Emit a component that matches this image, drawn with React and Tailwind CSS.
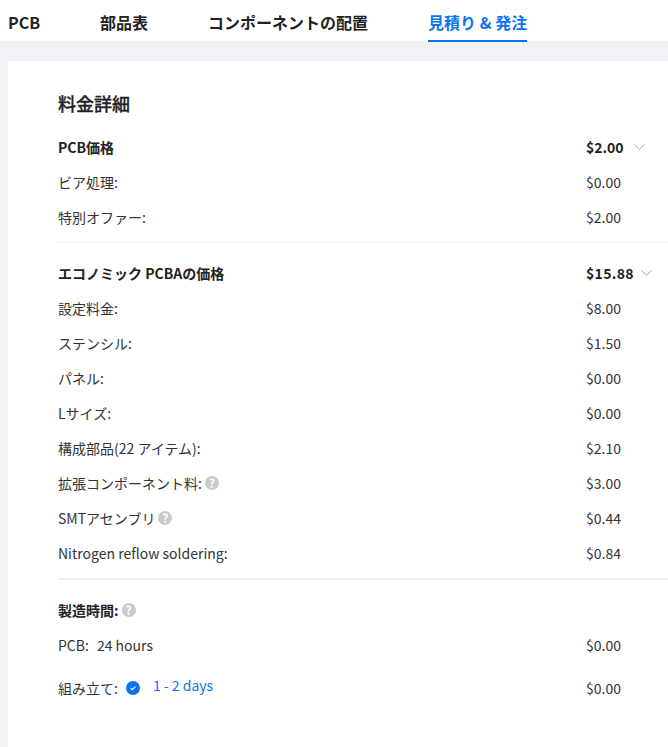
const font = { fontFamily: '"Noto Sans CJK JP", "Noto Sans", sans-serif' }

function Help() {
  return (
    <span className="ml-[3px] mt-[1px] flex h-[14px] w-[14px] items-center justify-center rounded-full bg-[#c8cacd] text-[12px] font-bold leading-none text-white">
      ?
    </span>
  )
}

function Row({ label, price, help }) {
  return (
    <div className="flex h-[35px] items-center">
      <div className="flex w-[528px] items-center text-[#333]">
        {label}
        {help && <Help />}
      </div>
      <div className="text-[#333]">{price}</div>
    </div>
  )
}

function Head({ label, price, wide }) {
  return (
    <div className="flex h-[35px] items-center font-bold text-[#222]">
      <div className="w-[528px]">{label}</div>
      <div className={wide ? 'tracking-[0.35px]' : ''}>{price}</div>
      <svg
        viewBox="0 0 11 6"
        className={wide ? 'ml-[7px] h-[6px] w-[11px]' : 'ml-[10px] h-[6px] w-[11px]'}
        fill="none"
        stroke="#a8a8a8"
        strokeWidth="1"
      >
        <path d="M0.3 0.3L5.5 5.3L10.7 0.3" />
      </svg>
    </div>
  )
}

export default function App() {
  return (
    <div style={font} className="min-h-[747px] bg-[#f0f2f5] text-[14px] leading-none">
      <nav className="flex h-[41px] items-start bg-white text-[16px] font-bold text-[#222]">
        <div className="ml-[8px] mt-[14px]">PCB</div>
        <div className="ml-[60px] mt-[14px]">部品表</div>
        <div className="ml-[60px] mt-[14px]">コンポーネントの配置</div>
        <div className="ml-[60px] h-[42px] border-b-[2px] border-[#0073ff] pt-[14px] text-[#0a74f0]">
          見積り &amp; 発注
        </div>
      </nav>

      <main className="ml-[8px] mt-[20px] h-[686px] bg-white pl-[50px] pt-[32px]">
        <h2 className="mb-[18px] text-[18px] font-medium leading-[20px] text-[#222] [-webkit-text-stroke:0.3px_#222]">料金詳細</h2>

        <div className="-mt-[2px]">
          <Head label="PCB価格" price="$2.00" />
          <Row label="ビア処理:" price="$0.00" />
          <Row label="特別オファー:" price="$2.00" />
        </div>

        <div className="mt-[8px] border-t border-[#eeeeee] pt-[12px]">
          <Head label="エコノミック PCBAの価格" price="$15.88" wide />
          <Row label="設定料金:" price="$8.00" />
          <Row label="ステンシル:" price="$1.50" />
          <Row label="パネル:" price="$0.00" />
          <Row label="Lサイズ:" price="$0.00" />
          <Row label="構成部品(22 アイテム):" price="$2.10" />
          <Row label="拡張コンポーネント料:" price="$3.00" help />
          <Row label="SMTアセンブリ" price="$0.44" help />
          <Row label="Nitrogen reflow soldering:" price="$0.84" />
        </div>

        <div className="mt-[8px] border-t-[2px] border-[#eeeeee] pt-[12px]">
          <div className="flex h-[35px] items-center font-bold text-[#222]">
            製造時間:
            <Help />
          </div>
          <Row label={<>PCB:<span className="ml-[8px]">24 hours</span></>} price="$0.00" />
          <div className="mt-[4px] flex h-[43px] items-center">
            <div className="flex w-[528px] items-center text-[#333]">
              組み立て:
              <span className="ml-[8px] flex h-[14px] w-[14px] items-center justify-center rounded-full bg-[#0a74f0]">
                <svg viewBox="0 0 10 10" className="h-[8px] w-[8px]" fill="none" stroke="white" strokeWidth="1.4">
                  <path d="M2 5.2l2.1 2 4-4" />
                </svg>
              </span>
              <span className="-mt-[5px] ml-[13px] text-[#0a74f0]">1 - 2 days</span>
            </div>
            <div className="text-[#333]">$0.00</div>
          </div>
        </div>
      </main>
    </div>
  )
}
